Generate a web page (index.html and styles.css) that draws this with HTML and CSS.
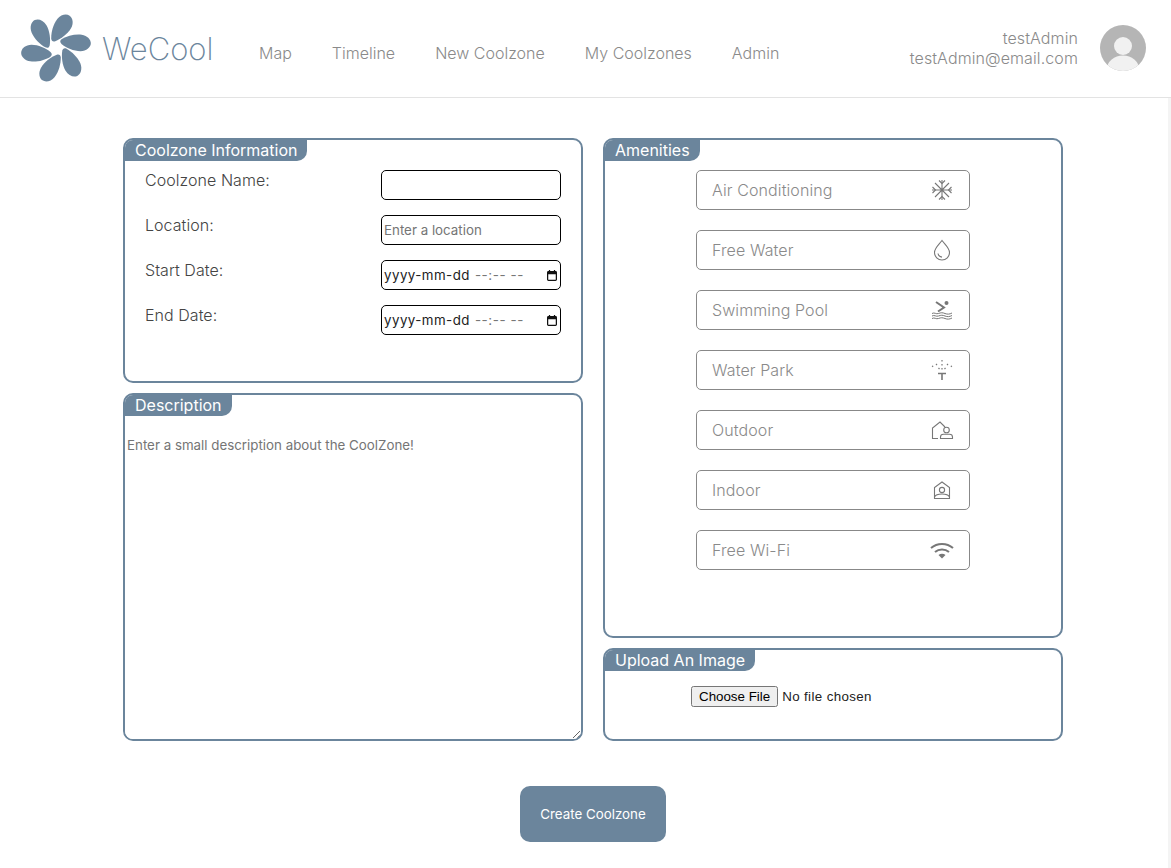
FILE: index.html
```html
<!DOCTYPE html>
<html lang="en">
<head>
    <meta charset="UTF-8">
    <title>WeCool - New Coolzone</title>
    <link rel="stylesheet" href="styles.css">
</head>
<body>
    <header class="topbar">
        <a class="brand" href="#">
            <svg class="brand-logo" width="72" height="72" viewBox="-37 -37 74 74">
                <defs>
                    <path id="petal" transform="translate(5 -20) rotate(34)" d="M-2.500 14C-6 9-9 1-8.500-6-8-12-4-16 0-16 4-16 8-12 8.500-6 9 1 6 9 2.500 14 1 16-1 16-2.500 14z"/>
                </defs>
                <g fill="#6b859c">
                    <use href="#petal"/>
                    <use href="#petal" transform="rotate(60)"/>
                    <use href="#petal" transform="rotate(120)"/>
                    <use href="#petal" transform="rotate(180)"/>
                    <use href="#petal" transform="rotate(240)"/>
                    <use href="#petal" transform="rotate(300)"/>
                </g>
            </svg>
            <span class="brand-name">WeCool</span>
        </a>
        <nav class="nav">
            <a href="#">Map</a>
            <a href="#">Timeline</a>
            <a href="#">New Coolzone</a>
            <a href="#">My Coolzones</a>
            <a href="#">Admin</a>
        </nav>
        <div class="user">
            <div class="user-text">
                <div>testAdmin</div>
                <div>testAdmin@email.com</div>
            </div>
            <svg class="avatar" width="46" height="46" viewBox="0 0 46 46">
                <clipPath id="avatarClip"><circle cx="23" cy="23" r="23"/></clipPath>
                <g clip-path="url(#avatarClip)">
                    <rect width="46" height="46" fill="#b5b5b5"/>
                    <circle cx="23" cy="21" r="9" fill="#f1f1f1"/>
                    <ellipse cx="23" cy="44" rx="16" ry="13.500" fill="#f1f1f1"/>
                </g>
            </svg>
        </div>
    </header>

    <main class="page">
        <form class="form-grid">
            <div class="column">
                <section class="card card-info">
                    <h2 class="card-title">Coolzone Information</h2>
                    <div class="field-list">
                        <div class="field">
                            <label for="czName">Coolzone Name:</label>
                            <input class="field-input" type="text" id="czName">
                        </div>
                        <div class="field">
                            <label for="czLocation">Location:</label>
                            <input class="field-input" type="text" id="czLocation" placeholder="Enter a location">
                        </div>
                        <div class="field">
                            <label>Start Date:</label>
                            <div class="field-input date-input">
                                <span class="date-part">yyyy-mm-dd</span>
                                <span class="time-part">--:-- --</span>
                                <svg class="calendar-icon" width="10" height="11" viewBox="0 0 12 13" fill="none" stroke="#111">
                                    <path d="M3 0v2M9 0v2" stroke-width="1.500"/>
                                    <rect x=".75" y="1.750" width="10.500" height="10.500" rx="1" stroke-width="1.500"/>
                                    <path d="M1 3.500h10" stroke-width="3"/>
                                </svg>
                            </div>
                        </div>
                        <div class="field">
                            <label>End Date:</label>
                            <div class="field-input date-input">
                                <span class="date-part">yyyy-mm-dd</span>
                                <span class="time-part">--:-- --</span>
                                <svg class="calendar-icon" width="10" height="11" viewBox="0 0 12 13" fill="none" stroke="#111">
                                    <path d="M3 0v2M9 0v2" stroke-width="1.500"/>
                                    <rect x=".75" y="1.750" width="10.500" height="10.500" rx="1" stroke-width="1.500"/>
                                    <path d="M1 3.500h10" stroke-width="3"/>
                                </svg>
                            </div>
                        </div>
                    </div>
                </section>
                <section class="card card-description">
                    <h2 class="card-title">Description</h2>
                    <textarea class="description-input" placeholder="Enter a small description about the CoolZone!"></textarea>
                </section>
            </div>

            <div class="column">
                <section class="card card-amenities">
                    <h2 class="card-title">Amenities</h2>
                    <div class="amenity-list">
                        <div class="amenity">
                            <span>Air Conditioning</span>
                            <svg width="24" height="24" viewBox="0 0 24 24" fill="none" stroke="#777" stroke-width="1.100">
                                <path d="M12 2v20M2 12h20M5 5l14 14M19 5L5 19"/>
                                <path d="M9 2.500l3 3 3-3M9 21.500l3-3 3 3M2.500 9l3 3-3 3M21.500 9l-3 3 3 3"/>
                            </svg>
                        </div>
                        <div class="amenity">
                            <span>Free Water</span>
                            <svg width="24" height="24" viewBox="0 0 24 24" fill="none" stroke="#777" stroke-width="1.100">
                                <path d="M12 2.500c3 4 7.500 7.500 7.500 12a7.500 7.500 0 0 1-15 0c0-4.500 4.500-8 7.500-12z"/>
                                <path d="M8 15.500c.4 2 2 3.400 4 3.600"/>
                            </svg>
                        </div>
                        <div class="amenity">
                            <span>Swimming Pool</span>
                            <svg width="24" height="24" viewBox="0 0 24 24" fill="none" stroke="#777" stroke-width="1">
                                <circle cx="16.500" cy="5" r="2" fill="#777" stroke="none"/>
                                <path d="M6 4l8 5.500-6 4" stroke-width="2"/>
                                <path d="M2 15.500c2.500-1.500 4 1 6.500 0s4-1 6.500 0 4.500.8 7-.5M2 18c2.500-1.500 4 1 6.500 0s4-1 6.500 0 4.500.8 7-.5M2 20.500c2.500-1.500 4 1 6.500 0s4-1 6.500 0 4.500.8 7-.5"/>
                            </svg>
                        </div>
                        <div class="amenity">
                            <span>Water Park</span>
                            <svg width="24" height="24" viewBox="0 0 24 24" fill="none" stroke="#777" stroke-width="1.200">
                                <path d="M12 2v1.500M12 6v1.500M12 10v1.500M6 6l1 1M8.500 10l1 1M18 6l-1 1M15.500 10l-1 1M2 8l1.200.6M22 8l-1.200.6"/>
                                <path d="M8 15.500h8M12 15.500V22" stroke-width="1.600"/>
                            </svg>
                        </div>
                        <div class="amenity">
                            <span>Outdoor</span>
                            <svg width="24" height="24" viewBox="0 0 24 24" fill="none" stroke="#777" stroke-width="1.100">
                                <path d="M8 20.500H2.500V10L10 4l5 5"/>
                                <circle cx="16.500" cy="12" r="2.800"/>
                                <path d="M10.500 20.500v-1.500c0-1.500 1.200-2.800 3-2.800h6c1.800 0 3 1.300 3 2.800v1.500z"/>
                            </svg>
                        </div>
                        <div class="amenity">
                            <span>Indoor</span>
                            <svg width="24" height="24" viewBox="0 0 24 24" fill="none" stroke="#777" stroke-width="1.100">
                                <path d="M4.500 20.500V9.500L12 4l7.500 5.500v11z"/>
                                <circle cx="12" cy="12" r="2.600"/>
                                <path d="M4.500 19c1-2.200 3.500-3 7.500-3s6.500.8 7.500 3"/>
                            </svg>
                        </div>
                        <div class="amenity">
                            <span>Free Wi-Fi</span>
                            <svg width="24" height="24" viewBox="0 0 24 24" fill="none" stroke="#777" stroke-width="2">
                                <path d="M1 10c6.200-5.500 15.800-5.500 22 0M5 14c4-3.500 10-3.500 14 0"/>
                                <path d="M8.500 17c2-1.800 5-1.800 7 0L12 20.500z" fill="#777" stroke="none"/>
                            </svg>
                        </div>
                    </div>
                </section>
                <section class="card card-upload">
                    <h2 class="card-title">Upload An Image</h2>
                    <input class="file-input" type="file">
                </section>
            </div>

            <div class="form-actions">
                <button class="create-button" type="button">Create Coolzone</button>
            </div>
        </form>
    </main>
</body>
</html>
```

FILE: styles.css
```css
* {
    box-sizing: border-box;
}
body {
    margin: 0;
    font-family: Inter, "Noto Sans", sans-serif;
    background-color: #fff;
    color: #555;
}
.topbar {
    display: flex;
    align-items: center;
    height: 98px;
    padding: 0 25px 1px 21px;
    border-bottom: 1px solid #e3e3e3;
}
.brand {
    display: flex;
    align-items: center;
    text-decoration: none;
    color: #6b859c;
}
.brand-logo {
    display: block;
    margin-left: -1px;
    margin-right: 10px;
}
.brand-name {
    width: 112px;
    font-size: 31px;
    font-weight: 250;
    white-space: nowrap;
}
.nav {
    display: flex;
    gap: 40px;
    margin: 9px 0 0 45px;
}
.nav a {
    font-size: 16px;
    font-weight: 300;
    color: #8a8a8a;
    text-decoration: none;
}
.user {
    display: flex;
    align-items: center;
    gap: 22px;
    margin-left: auto;
}
.user-text {
    font-size: 16px;
    font-weight: 300;
    line-height: 20px;
    letter-spacing: .1px;
    color: #8a8a8a;
    text-align: right;
}
.avatar {
    display: block;
}
.page {
    height: 770px;
    padding: 40px 0 0 123px;
    border-right: 3px solid #f4f4f4;
}
.form-grid {
    display: grid;
    grid-template-columns: 460px 460px;
    column-gap: 20px;
    width: 940px;
}
.column {
    display: flex;
    flex-direction: column;
    gap: 10px;
    height: 603px;
}
.card {
    border: 2px solid #6b859c;
    border-radius: 10px;
    background: #fff;
    overflow: hidden;
}
.card-title {
    width: fit-content;
    height: 21px;
    margin: 0;
    padding: 0 10px;
    font-size: 16px;
    font-weight: 400;
    line-height: 21px;
    color: #fff;
    background-color: #6b859c;
    border-bottom-right-radius: 10px;
}
.card-info {
    height: 245px;
}
.field-list {
    display: flex;
    flex-direction: column;
    gap: 15px;
    padding: 9px 20px 0;
}
.field {
    display: flex;
    justify-content: space-between;
    height: 30px;
}
.field label {
    font-size: 16px;
    font-weight: 300;
    line-height: 20px;
    letter-spacing: .05px;
    color: #444;
}
.field-input {
    width: 180px;
    height: 30px;
    padding: 1px 2px;
    border: 1px solid #000;
    border-radius: 5px;
    background: #fff;
    font-family: Inter, sans-serif;
    font-size: 13.33px;
}
.date-input {
    display: flex;
    align-items: center;
    color: #222;
}
.date-part {
    letter-spacing: .45px;
}
.time-part {
    margin-left: 5px;
    letter-spacing: .6px;
    color: #777;
}
.calendar-icon {
    display: block;
    margin: 0 1px 0 auto;
}
.card-description {
    flex: 1;
    display: flex;
    flex-direction: column;
}
.description-input {
    display: block;
    flex: 1;
    width: 100%;
    margin-top: 19px;
    padding: 2px;
    border: none;
    outline: none;
    font-family: Inter, sans-serif;
    font-size: 13.33px;
}
.card-amenities {
    height: 500px;
}
.amenity-list {
    display: flex;
    flex-direction: column;
    align-items: center;
    gap: 20px;
    padding-top: 9px;
}
.amenity {
    display: flex;
    align-items: center;
    justify-content: space-between;
    width: 274px;
    height: 40px;
    padding: 0 15px;
    border: 1px solid #888;
    border-radius: 5px;
    font-size: 16px;
    font-weight: 300;
    letter-spacing: .1px;
    color: #8a8a8a;
}
.card-upload {
    flex: 1;
}
.file-input {
    display: block;
    margin: 15px 0 0 86px;
    font-family: "Liberation Sans", Arial, sans-serif;
    font-size: 13.33px;
    letter-spacing: .38px;
    color: #222;
}
.file-input::file-selector-button {
    letter-spacing: 0;
    color: #000;
}
.form-actions {
    grid-column: 1 / 3;
    display: flex;
    justify-content: center;
    margin-top: 45px;
}
.create-button {
    width: 146px;
    height: 56px;
    border: none;
    border-radius: 10px;
    background-color: #6b859c;
    color: #fff;
    font-family: Inter, sans-serif;
    font-size: 13.33px;
    cursor: pointer;
}
```
